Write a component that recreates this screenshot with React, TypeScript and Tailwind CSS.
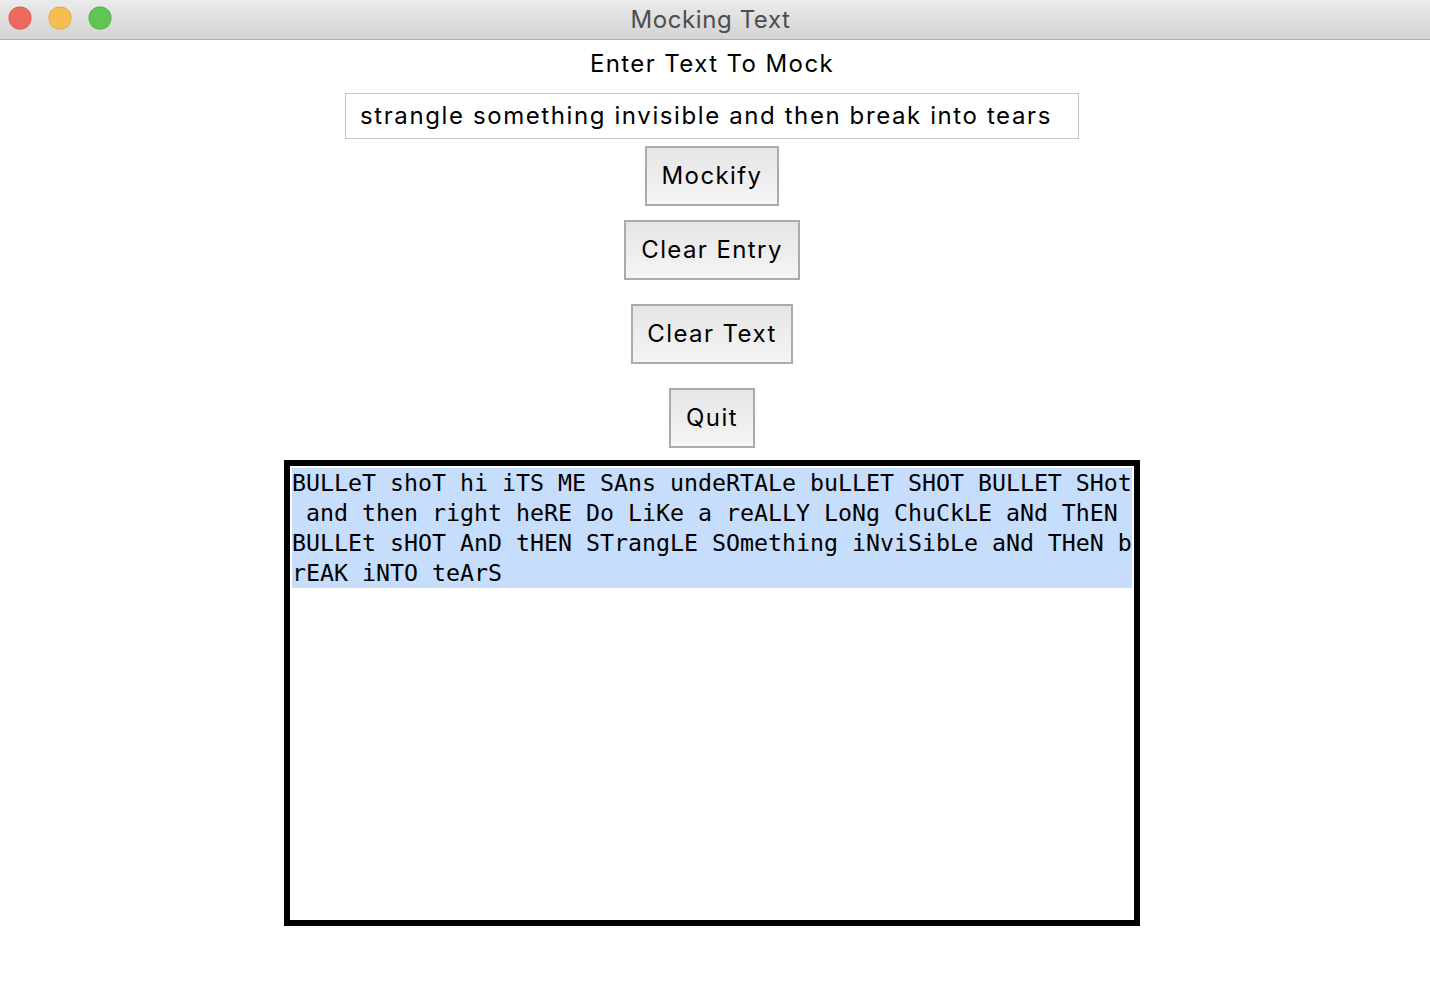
const LINES = [
  'BULLeT shoT hi iTS ME SAns undeRTALe buLLET SHOT BULLET SHot',
  ' and then right heRE Do LiKe a reALLY LoNg ChuCkLE aNd ThEN ',
  'BULLEt sHOT AnD tHEN STrangLE SOmething iNviSibLe aNd THeN b',
  'rEAK iNTO teArS',
];

function TrafficLight({ fill, ring }: { fill: string; ring: string }) {
  return (
    <svg width="24" height="24" viewBox="0 0 24 24">
      <circle cx="12" cy="12" r="11.5" fill={ring} />
      <circle cx="12" cy="12" r="10.8" fill={fill} />
    </svg>
  );
}

function MacButton({ label, width, className }: { label: string; width: string; className?: string }) {
  return (
    <button
      className={`${width} ${className ?? ''} h-[60px] border-2 border-[#ababab] bg-gradient-to-b from-[#e5e5e5] to-[#f5f5f5] text-[24px] tracking-[1.4px] text-black leading-none`}
    >
      {label}
    </button>
  );
}

export default function App() {
  return (
    <div className="w-[1430px] h-[1000px] bg-white flex flex-col font-['Inter','Liberation_Sans',sans-serif]">
      <div className="relative h-[40px] flex items-center justify-center pr-[9px] bg-gradient-to-b from-[#ebebeb] to-[#d3d3d3] border-b border-[#b0b0b0]">
        <div className="absolute left-[8px] top-[6px] flex gap-[16px]">
          <TrafficLight fill="#ee6a5f" ring="#d2574c" />
          <TrafficLight fill="#f6be50" ring="#d9a23c" />
          <TrafficLight fill="#61c554" ring="#4fa841" />
        </div>
        <span className="text-[24px] tracking-[0.6px] text-[#4d4d4d] leading-none">Mocking Text</span>
      </div>

      <div className="flex flex-col items-center pr-[6px]">
        <div className="mt-[8px] h-[32px] flex items-center text-[24px] tracking-[1.4px] text-black leading-none">
          Enter Text To Mock
        </div>
        <div className="mt-[13px] w-[734px] h-[46px] border border-[#c2c2c2] flex items-center px-[14px] text-[24px] tracking-[1.6px] text-black leading-none">
          strangle something invisible and then break into tears
        </div>
        <MacButton label="Mockify" width="w-[134px]" className="mt-[7px]" />
        <MacButton label="Clear Entry" width="w-[176px]" className="mt-[14px]" />
        <MacButton label="Clear Text" width="w-[162px]" className="mt-[24px]" />
        <MacButton label="Quit" width="w-[86px]" className="mt-[24px]" />

        <div className="mt-[12px] w-[856px] h-[466px] border-[6px] border-black bg-white p-[2px]">
          <div className="bg-[#c6ddfb] font-['DejaVu_Sans_Mono','Liberation_Mono',monospace] text-[23.25px] leading-[30px] text-black">
            {LINES.map((line, i) => (
              <div key={i} className="whitespace-pre">
                {line}
              </div>
            ))}
          </div>
        </div>
      </div>
    </div>
  );
}
